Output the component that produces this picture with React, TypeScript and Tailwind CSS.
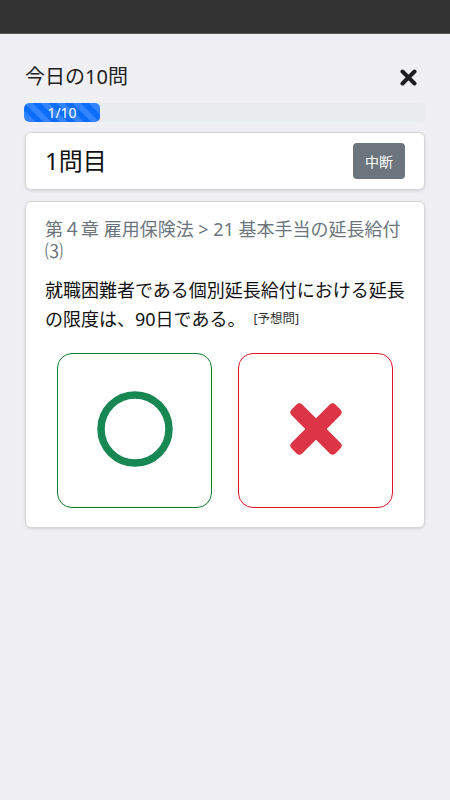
import React from "react";

export default function App() {
  const font = { fontFamily: '"Noto Sans", "Noto Sans CJK JP", sans-serif' };
  return (
    <div className="w-[450px] min-h-[800px] bg-[#efeff4] text-[#212529]" style={font}>
      <div className="h-[34px] bg-[#333333] border-b border-[#555]" />
      <div className="px-[25px]">
        <div className="flex items-center justify-between pt-[29px]">
          <div className="text-[20px] leading-[28px] text-[#222]">今日の10問</div>
          <button className="mr-[8px] w-[17px] h-[17px] flex items-center justify-center">
            <svg width="17" height="17" viewBox="0 0 17 17">
              <path d="M2.5 2.5 L14.5 14.5 M14.5 2.5 L2.5 14.5" stroke="#1e1e1e" strokeWidth="4" strokeLinecap="round" />
            </svg>
          </button>
        </div>
        <div className="mt-[12px] h-[19px] -ml-px rounded-[5px] bg-[#e9ecef] overflow-hidden flex">
          <div className="w-[76px] h-full bg-[#0d6efd] rounded-[5px] bg-[linear-gradient(45deg,rgba(255,255,255,.15)_25%,transparent_25%,transparent_50%,rgba(255,255,255,.15)_50%,rgba(255,255,255,.15)_75%,transparent_75%,transparent)] bg-[length:16px_16px] flex items-center justify-center text-white text-[14px] leading-none">
            1/10
          </div>
        </div>
        <div className="mt-[10px] h-[58px] bg-white border border-[#d6d6d6] rounded-[6px] shadow-[0_1px_3px_rgba(0,0,0,0.12)] flex items-center justify-between pl-[19px] pr-[19px]">
          <div className="text-[24px] leading-none text-[#111]">1問目</div>
          <button className="w-[52px] h-[36px] rounded-[4px] bg-[#6c757d] text-white text-[14px] flex items-center justify-center">
            中断
          </button>
        </div>
        <div className="mt-[11px] bg-white border border-[#d6d6d6] rounded-[6px] shadow-[0_1px_3px_rgba(0,0,0,0.12)] pt-[16px] pb-[19px] px-[19px]">
          <div className="text-[18px] leading-[22px] text-[#6c757d]">
            第４章 雇用保険法 &gt; 21 基本手当の延長給付⑶
          </div>
          <div className="mt-[14px] text-[18px] leading-[29px] text-[#111]">
            就職困難者である個別延長給付における延長の限度は、90日である。
            <span className="ml-[8px] text-[12.5px] leading-none align-[3px] text-[#333]">[予想問]</span>
          </div>
          <div className="mt-[19px] flex justify-center gap-[26px]">
            <button className="w-[155px] h-[155px] rounded-[15px] border border-[#0a7d2c] bg-white flex items-center justify-center">
              <svg width="76" height="76" viewBox="0 0 76 76" className="-mt-[4px]">
                <circle cx="38" cy="38" r="34" fill="none" stroke="#178753" strokeWidth="7.5" />
              </svg>
            </button>
            <button className="w-[155px] h-[155px] rounded-[15px] border border-[#e0152a] bg-white flex items-center justify-center">
              <svg width="56" height="56" viewBox="-28 -28 56 56" className="-mt-[4px]">
                <rect x="-7.5" y="-31" width="15" height="62" rx="4" fill="#dc3545" transform="rotate(45)" />
                <rect x="-7.5" y="-31" width="15" height="62" rx="4" fill="#dc3545" transform="rotate(-45)" />
              </svg>
            </button>
          </div>
        </div>
      </div>
    </div>
  );
}
